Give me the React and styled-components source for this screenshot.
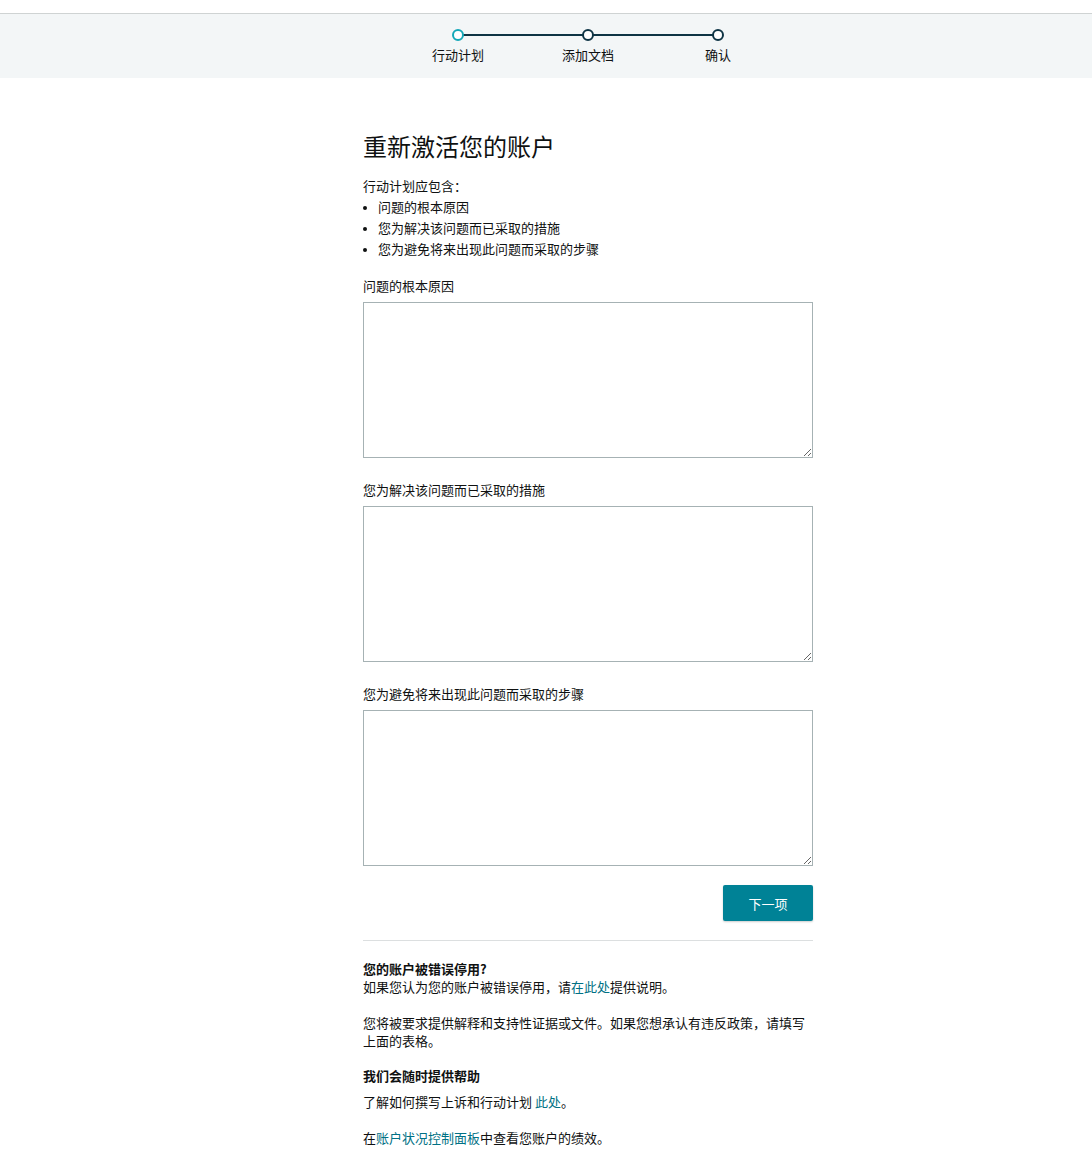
import React from 'react';
import styled, { createGlobalStyle } from 'styled-components';

const GlobalStyle = createGlobalStyle`
  body {
    margin: 0;
    background: #fff;
    font-family: "Noto Sans CJK SC", "Noto Sans", sans-serif;
    color: #0f1111;
  }
`;

const steps = ['行动计划', '添加文档', '确认'];

function App() {
  return (
    <>
      <GlobalStyle />
      <TopGap />
      <StepBand>
        <Stepper>
          <Track />
          {steps.map((s, i) => (
            <Step key={s}>
              <Dot active={i === 0} />
              <StepLabel>{s}</StepLabel>
            </Step>
          ))}
        </Stepper>
      </StepBand>
      <Page>
        <Main>
          <Title>重新激活您的账户</Title>
          <Text>行动计划应包含：</Text>
          <Bullets>
            <li>问题的根本原因</li>
            <li>您为解决该问题而已采取的措施</li>
            <li>您为避免将来出现此问题而采取的步骤</li>
          </Bullets>
          <Field>
            <Label>问题的根本原因</Label>
            <Area />
          </Field>
          <Field>
            <Label>您为解决该问题而已采取的措施</Label>
            <Area />
          </Field>
          <Field>
            <Label>您为避免将来出现此问题而采取的步骤</Label>
            <Area />
          </Field>
          <Actions>
            <NextButton>下一项</NextButton>
          </Actions>
          <Divider />
          <Help>
            <Strong>您的账户被错误停用?</Strong>
            <Para>
              如果您认为您的账户被错误停用，请<Link>在此处</Link>提供说明。
            </Para>
            <Para gap="18px">
              您将被要求提供解释和支持性证据或文件。如果您想承认有违反政策，请填写上面的表格。
            </Para>
            <Strong gap="17px">我们会随时提供帮助</Strong>
            <Para gap="8px">
              了解如何撰写上诉和行动计划 <Link>此处</Link>。
            </Para>
            <Para gap="18px">
              在<Link>账户状况控制面板</Link>中查看您账户的绩效。
            </Para>
          </Help>
        </Main>
      </Page>
    </>
  );
}

const TopGap = styled.div`
  height: 13px;
  border-bottom: 1px solid #cfd3d3;
`;

const StepBand = styled.div`
  background: #f3f6f7;
  height: 64px;
  display: flex;
  justify-content: center;
  padding-left: 84px;
`;

const Stepper = styled.div`
  position: relative;
  width: 390px;
  display: flex;
  justify-content: space-between;
  padding-top: 15px;
`;

const Track = styled.div`
  position: absolute;
  top: 20px;
  left: 65px;
  right: 65px;
  height: 2px;
  background: #0e3444;
`;

const Step = styled.div`
  position: relative;
  width: 130px;
  display: flex;
  flex-direction: column;
  align-items: center;
`;

const Dot = styled.div`
  width: 8px;
  height: 8px;
  border-radius: 50%;
  background: #fff;
  border: 2px solid ${props => (props.active ? '#14a8b8' : '#0e3444')};
`;

const StepLabel = styled.div`
  margin-top: 4px;
  font-size: 13px;
  line-height: 20px;
  color: #0f1111;
`;

const Page = styled.div`
  display: flex;
  justify-content: center;
  padding-left: 84px;
`;

const Main = styled.main`
  width: 450px;
  padding-top: 50px;
  padding-bottom: 20px;
`;

const Title = styled.h1`
  margin: 0 0 11px;
  font-size: 24px;
  font-weight: 400;
  line-height: 36px;
  color: #0f1111;
`;

const Text = styled.div`
  font-size: 13px;
  line-height: 21px;
`;

const Bullets = styled.ul`
  margin: 0 0 17px;
  padding-left: 15px;
  font-size: 13px;
  line-height: 21px;
  li::marker {
    font-size: 11px;
  }
`;

const Field = styled.div`
  margin-bottom: 22px;
`;

const Label = styled.div`
  font-size: 13px;
  line-height: 20px;
  margin-bottom: 6px;
`;

const Area = styled.textarea`
  display: block;
  box-sizing: border-box;
  width: 450px;
  height: 156px;
  border: 1px solid #a6b2b4;
  border-radius: 0;
  padding: 6px;
  font-family: inherit;
  resize: vertical;
  background: #fff;
`;

const Actions = styled.div`
  display: flex;
  justify-content: flex-end;
  margin-top: -3px;
`;

const NextButton = styled.button`
  width: 90px;
  height: 36px;
  border: none;
  border-radius: 2px;
  background: #008296;
  color: #fff;
  font-family: inherit;
  font-size: 13px;
  box-shadow: 0 1px 2px rgba(0, 0, 0, 0.2);
  cursor: pointer;
`;

const Divider = styled.hr`
  margin: 19px 0 19px;
  border: none;
  border-top: 1px solid #dcdfe0;
`;

const Help = styled.div`
  font-size: 13px;
  line-height: 18px;
`;

const Strong = styled.div`
  font-weight: 700;
  margin-top: ${props => props.gap || '0'};
`;

const Para = styled.div`
  margin-top: ${props => props.gap || '0'};
`;

const Link = styled.span`
  color: #007185;
`;

export default App;
